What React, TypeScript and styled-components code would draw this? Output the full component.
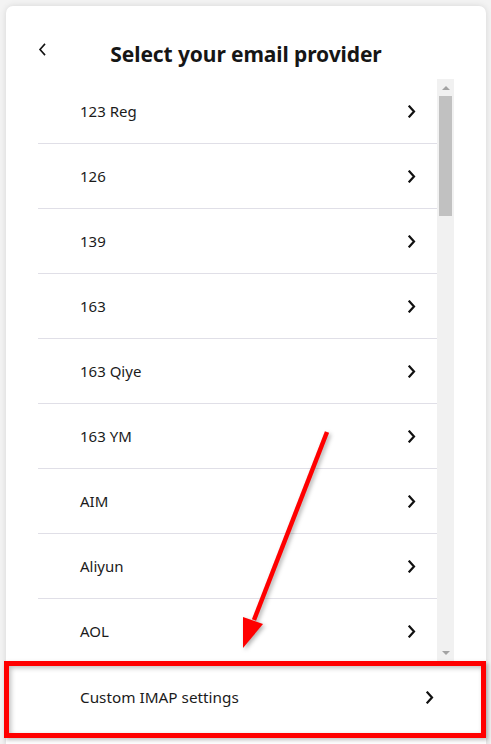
import React, { FunctionComponent } from 'react';
import styled, { createGlobalStyle } from 'styled-components';

const GlobalStyle = createGlobalStyle`
  html, body {
    margin: 0;
    padding: 0;
    background: #f3f3f3;
    height: 100%;
    overflow: hidden;
  }
  * {
    box-sizing: border-box;
  }
`;

const Page = styled.div`
  position: relative;
  width: 491px;
  height: 744px;
  padding: 6px 5px 0 6px;
  font-family: 'Noto Sans', 'Open Sans', Arial, sans-serif;
  color: #1b1b1b;
`;

const Card = styled.div`
  background: #ffffff;
  border-radius: 7px;
  box-shadow: 0 0 6px rgba(0, 0, 0, 0.12);
  width: 480px;
  height: 760px;
  display: flex;
  flex-direction: column;
`;

const Header = styled.div`
  display: grid;
  grid-template-columns: 40px 1fr 40px;
  align-items: center;
  height: 73px;
  padding: 22px 32px 0;
`;

const BackButton = styled.button`
  border: none;
  background: none;
  padding: 0;
  width: 10px;
  height: 14px;
  margin-top: -8px;
  display: flex;
  align-items: center;
  cursor: pointer;
`;

const Title = styled.h1`
  margin: 0;
  text-align: center;
  font-size: 21px;
  font-weight: 700;
  line-height: 26px;
  letter-spacing: -0.1px;
  color: #161616;
`;

const ListArea = styled.div`
  display: flex;
  height: 582px;
  margin: 0 32px;
`;

const List = styled.ul`
  flex: 1;
  margin: 0;
  padding: 0;
  list-style: none;
  overflow: hidden;
`;

const Row = styled.li`
  display: flex;
  align-items: center;
  justify-content: space-between;
  height: 65px;
  padding: 0 21px 0 42px;
  border-bottom: 1px solid #e0dfe7;
  font-size: 15px;
  cursor: pointer;
`;

const Scrollbar = styled.div`
  width: 17px;
  background: #f1f1f1;
  display: flex;
  flex-direction: column;
  align-items: center;
`;

const ScrollArrow = styled.div<{ $down?: boolean }>`
  height: 17px;
  width: 17px;
  display: flex;
  align-items: center;
  justify-content: center;

  &::after {
    content: '';
    border-left: 4px solid transparent;
    border-right: 4px solid transparent;
    ${(p) =>
      p.$down ? 'border-top: 4px solid #a3a3a3;' : 'border-bottom: 4px solid #a3a3a3;'}
  }
`;

const Thumb = styled.div`
  width: 13px;
  height: 120px;
  background: #c1c1c1;
`;

const TrackFill = styled.div`
  flex: 1;
`;

const Footer = styled.div`
  display: flex;
  align-items: center;
  justify-content: space-between;
  height: 72px;
  margin: 0 32px;
  padding: 0 20px 0 42px;
  font-size: 15.3px;
`;

const Highlight = styled.div`
  position: absolute;
  left: 4px;
  top: 661px;
  width: 482px;
  height: 77px;
  border: 5px solid #ff0000;
  box-shadow: inset 2px 2px 5px rgba(0, 0, 0, 0.25), 2px 2px 4px rgba(0, 0, 0, 0.25);
  pointer-events: none;
`;

const ArrowOverlay = styled.svg`
  position: absolute;
  left: 0;
  top: 0;
  pointer-events: none;
  filter: drop-shadow(2px 2px 2px rgba(0, 0, 0, 0.3));
`;

const Chevron: FunctionComponent<{ left?: boolean }> = ({ left }) => (
  <svg width="8" height="13" viewBox="0 0 8 13" fill="none">
    <path
      d={left ? 'M6.5 1.5 L2 6.5 L6.5 11.5' : 'M1.5 1.5 L6 6.5 L1.5 11.5'}
      stroke="#111"
      strokeWidth={left ? 1.6 : 2.2}
      strokeLinecap="square"
    />
  </svg>
);

const providers = ['123 Reg', '126', '139', '163', '163 Qiye', '163 YM', 'AIM', 'Aliyun', 'AOL', 'Apple'];

const App: FunctionComponent = () => {
  return (
    <Page>
      <GlobalStyle />
      <Card>
        <Header>
          <BackButton aria-label="Back">
            <Chevron left />
          </BackButton>
          <Title>Select your email provider</Title>
          <span />
        </Header>
        <ListArea>
          <List>
            {providers.map((name) => (
              <Row key={name}>
                {name}
                <Chevron />
              </Row>
            ))}
          </List>
          <Scrollbar>
            <ScrollArrow />
            <Thumb />
            <TrackFill />
            <ScrollArrow $down />
          </Scrollbar>
        </ListArea>
        <Footer>
          Custom IMAP settings
          <Chevron />
        </Footer>
      </Card>
      <Highlight />
      <ArrowOverlay width="491" height="744" viewBox="0 0 491 744">
        <line x1="327" y1="432" x2="254" y2="620" stroke="#ff0000" strokeWidth="4.5" />
        <polygon points="243,617 263,624 243,648" fill="#ff0000" />
      </ArrowOverlay>
    </Page>
  );
};

export default App;
